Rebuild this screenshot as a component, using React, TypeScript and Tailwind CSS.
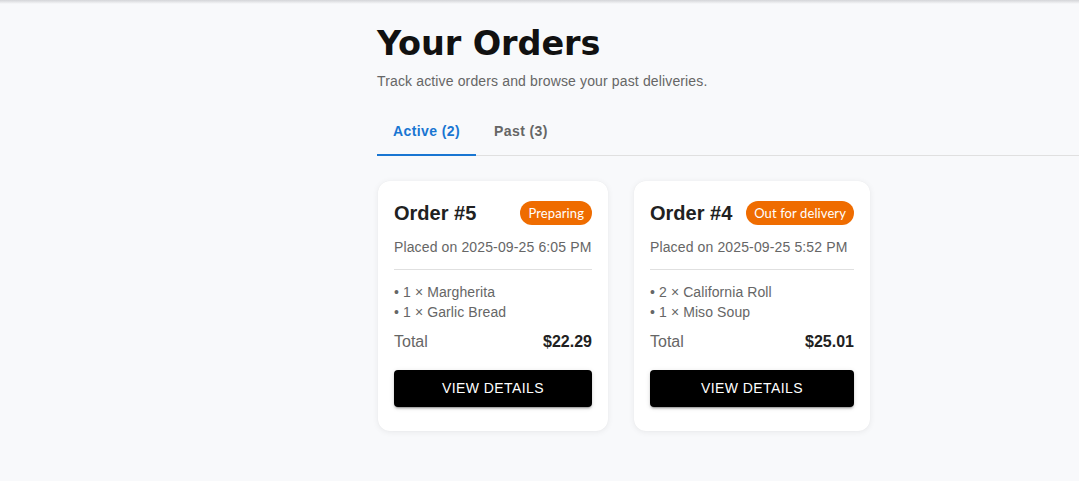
import React from "react";

type Order = {
  id: number;
  status: string;
  placed: string;
  items: string[];
  total: string;
  width: string;
};

const orders: Order[] = [
  {
    id: 5,
    status: "Preparing",
    placed: "Placed on 2025-09-25 6:05 PM",
    items: ["1 × Margherita", "1 × Garlic Bread"],
    total: "$22.29",
    width: "w-[230px]",
  },
  {
    id: 4,
    status: "Out for delivery",
    placed: "Placed on 2025-09-25 5:52 PM",
    items: ["2 × California Roll", "1 × Miso Soup"],
    total: "$25.01",
    width: "w-[236px]",
  },
];

function OrderCard({ o }: { o: Order }) {
  return (
    <div
      className={`${o.width} bg-white rounded-[12px] shadow-[0_1px_6px_rgba(0,0,0,0.07),0_0_1px_rgba(0,0,0,0.05)] px-4 pt-4 pb-6`}
    >
      <div className="flex items-center justify-between h-8">
        <span className="text-[20px] leading-8 font-bold text-[#212121]">
          Order #{o.id}
        </span>
        <span className="h-6 px-2 rounded-full bg-[#ef6c00] text-white text-[13px] leading-6 tracking-[0.1px] font-['Lato',sans-serif]">
          {o.status}
        </span>
      </div>
      <div className="mt-[8px] text-[14px] leading-5 tracking-[0.13px] text-[#666666]">{o.placed}</div>
      <div className="my-3 h-px bg-[#e0e0e0]" />
      <div className="flex flex-col text-[14px] leading-5 tracking-[0.1px] text-[#666666]">
        {o.items.map((it) => (
          <div key={it}>• {it}</div>
        ))}
      </div>
      <div className="mt-[8px] flex items-center justify-between h-6 text-[16px] leading-6">
        <span className="text-[#666666]">Total</span>
        <span className="font-bold text-[#212121]">{o.total}</span>
      </div>
      <button className="mt-[16px] w-full h-[37px] rounded-[4px] bg-black text-white text-[14px] font-medium tracking-[0.4px] uppercase shadow-[0_3px_1px_-2px_rgba(0,0,0,0.2),0_2px_2px_0_rgba(0,0,0,0.14),0_1px_5px_0_rgba(0,0,0,0.12)]">
        View Details
      </button>
    </div>
  );
}

export default function App() {
  return (
    <div className="min-h-[481px] bg-[#f8f9fb] font-['Liberation_Sans',Arial,sans-serif]">
      <div className="h-[4px] bg-gradient-to-b from-[#d4d5d8] to-[#f8f9fb]" />
      <div className="pl-[377px]">
        <h1 className="mt-[19px] h-[42px] leading-[42px] text-[33.5px] font-bold text-[#111111] font-['DejaVu_Sans',sans-serif] tracking-[-0.1px]">
          Your Orders
        </h1>
        <p className="mt-[6px] text-[14px] leading-5 tracking-[0.14px] text-[#666666]">
          Track active orders and browse your past deliveries.
        </p>
        <div className="mt-[17px] flex border-b border-[#e0e0e0]">
          <button className="h-[48px] -mb-px px-4 border-b-2 border-[#1976d2] text-[14px] font-bold tracking-[0.4px] text-[#1976d2]">
            Active (2)
          </button>
          <button className="h-[48px] -mb-px px-4 ml-[2px] border-b-2 border-transparent text-[14px] font-bold tracking-[0.4px] text-[#666666]">
            Past (3)
          </button>
        </div>
        <div className="mt-[25px] ml-px flex gap-[26px]">
          {orders.map((o) => (
            <OrderCard key={o.id} o={o} />
          ))}
        </div>
      </div>
    </div>
  );
}
